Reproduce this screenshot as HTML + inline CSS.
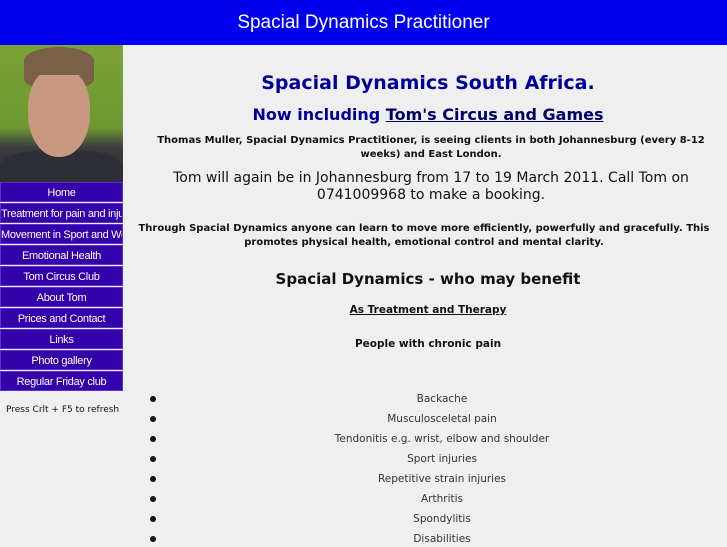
<!DOCTYPE html>
<html><head><style>
body{margin:0;width:727px;height:545px;overflow:hidden;background:#efefef;font-family:"DejaVu Sans",sans-serif;}
.hdr{position:absolute;left:0;top:0;width:727px;height:45px;background:#0000ee;color:#fff;font-family:"Liberation Sans",sans-serif;font-size:19px;text-align:center;line-height:45px}
.photo{position:absolute;left:0;top:45px;width:123px;height:137px;background:linear-gradient(180deg,#7aa238 0%,#6c9a30 60%,#3a3a40 75%,#2c2c34 100%);overflow:hidden}
.face{position:absolute;left:28px;top:22px;width:62px;height:90px;border-radius:45% 45% 48% 48%;background:#c89880}
.hair{position:absolute;left:24px;top:2px;width:70px;height:40px;border-radius:50% 50% 20% 20%;background:#7a6048}
.shirt{position:absolute;left:0;top:105px;width:123px;height:40px;background:#2e2e36;border-radius:40% 40% 0 0}
.nav{position:absolute;left:0;top:182px;width:123px}
.nav div{background:#3300aa;border:1px solid #5533cc;box-sizing:border-box;height:20px;margin-bottom:1px;color:#fff;font-family:"Liberation Sans",sans-serif;font-size:11px;line-height:20px;text-align:center;white-space:nowrap;overflow:hidden;letter-spacing:-0.3px}
.refresh{position:absolute;left:6px;top:405px;font-size:9px;color:#111}
.main{position:absolute;left:131px;top:0;width:594px;text-align:center;color:#111}
.t1{position:absolute;top:72px;width:100%;font-size:19px;font-weight:bold;color:#000099}
.t2{position:absolute;top:105px;width:100%;font-size:16px;font-weight:bold;color:#000099}
.t2 u{color:#000066}
.p1{position:absolute;top:134px;left:8px;width:584px;font-size:10px;font-weight:bold;line-height:14px}
.p2{position:absolute;top:170px;left:15px;width:570px;font-size:14px;line-height:17px}
.p3{position:absolute;top:222px;left:-7px;width:600px;font-size:10px;font-weight:bold;line-height:14px}
.h3{position:absolute;top:270px;width:100%;font-size:15px;font-weight:bold}
.s1{position:absolute;top:304px;width:100%;font-size:10.5px;font-weight:bold}
.s2{position:absolute;top:338px;width:100%;font-size:10.5px;font-weight:bold}
.li{position:absolute;left:0;width:594px;font-size:10.5px;color:#333;text-align:center}
.dot{position:absolute;left:5px;width:6px;height:6px;border-radius:50%;background:#111}
</style></head><body>
<div class="hdr">Spacial Dynamics Practitioner</div>
<div class="photo"><div class="hair"></div><div class="shirt"></div><div class="face"></div><div class="hair" style="height:28px"></div></div>
<div class="nav">
<div>Home</div><div>Treatment for pain and injury</div><div>Movement in Sport and Work</div><div>Emotional Health</div><div>Tom Circus Club</div><div>About Tom</div><div>Prices and Contact</div><div>Links</div><div>Photo gallery</div><div>Regular Friday club</div>
</div>
<div class="refresh">Press Crlt + F5 to refresh</div>
<div class="main">
<div class="t1">Spacial Dynamics South Africa.</div>
<div class="t2">Now including <u>Tom's Circus and Games</u></div>
<div class="p1">Thomas Muller, Spacial Dynamics Practitioner, is seeing clients in both Johannesburg (every 8-12 weeks) and East London.</div>
<div class="p2">Tom will again be in Johannesburg from 17 to 19 March 2011. Call Tom on 0741009968 to make a booking.</div>
<div class="p3">Through Spacial Dynamics anyone can learn to move more efficiently, powerfully and gracefully. This promotes physical health, emotional control and mental clarity.</div>
<div class="h3">Spacial Dynamics - who may benefit</div>
<div class="s1"><u>As Treatment and Therapy</u></div>
<div class="s2">People with chronic pain</div>
</div>
<div style="position:absolute;left:145px;top:2px;width:594px;height:545px">
<div class="dot" style="top:394px"></div><div class="li" style="top:391px">Backache</div>
<div class="dot" style="top:414px"></div><div class="li" style="top:411px">Musculosceletal pain</div>
<div class="dot" style="top:434px"></div><div class="li" style="top:431px">Tendonitis e.g. wrist, elbow and shoulder</div>
<div class="dot" style="top:454px"></div><div class="li" style="top:451px">Sport injuries</div>
<div class="dot" style="top:474px"></div><div class="li" style="top:471px">Repetitive strain injuries</div>
<div class="dot" style="top:494px"></div><div class="li" style="top:491px">Arthritis</div>
<div class="dot" style="top:514px"></div><div class="li" style="top:511px">Spondylitis</div>
<div class="dot" style="top:534px"></div><div class="li" style="top:531px">Disabilities</div>
</div>
</body></html>
